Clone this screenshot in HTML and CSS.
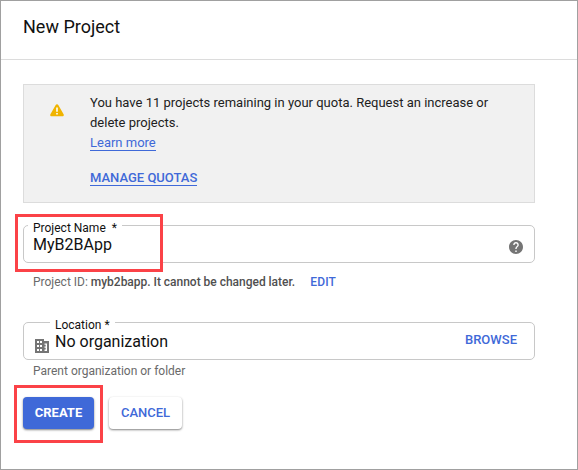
FILE: index.html
```html
<!DOCTYPE html>
<html lang="en">
<head>
<meta charset="utf-8">
<title>New Project</title>
<link rel="stylesheet" href="styles.css">
</head>
<body>
<div class="window">
  <header class="header"><h1 class="title">New Project</h1></header>
  <main class="content">
    <section class="notice">
      <svg class="warning" viewBox="0 0 14 13"><path d="M7 .2c.6 0 1 .3 1.300.8l5.300 9.300c.6 1-.1 2-1.200 2H1.600c-1.100 0-1.800-1-1.200-2L5.700 1C6 .5 6.400.2 7 .2z" fill="#f0b400"/><path d="M6.200 3.500h1.600v4.200H6.200zM6.200 9h1.600v1.600H6.200z" fill="#fff"/></svg>
      <div class="notice-body">
        <p class="notice-text">You have 11 projects remaining in your quota. Request an increase or<br>delete projects.</p>
        <a class="link learn">Learn more</a>
        <a class="link manage">MANAGE QUOTAS</a>
      </div>
    </section>

    <div class="field name-field">
      <span class="label">Project Name &nbsp;*</span>
      <span class="value">MyB2BApp</span>
      <svg class="help" viewBox="2 2 20 20"><path fill="#757575" d="M12 2C6.480 2 2 6.480 2 12s4.480 10 10 10 10-4.480 10-10S17.520 2 12 2zm1 17h-2v-2h2v2zm2.070-7.750l-.9.920C13.450 12.900 13 13.500 13 15h-2v-.5c0-1.100.45-2.100 1.170-2.830l1.240-1.260c.37-.36.59-.86.59-1.410 0-1.100-.9-2-2-2s-2 .9-2 2H8c0-2.210 1.790-4 4-4s4 1.790 4 4c0 .88-.36 1.680-.93 2.250z"/></svg>
      <i class="mark mark-name"></i>
    </div>
    <p class="hint id-hint"><span class="id-label">Project ID:</span> <span class="id-text">myb2bapp. It cannot be changed later.</span><a class="action edit">EDIT</a></p>

    <div class="field location-field">
      <span class="label">Location *</span>
      <svg class="building" viewBox="0 0 14 14"><path fill="#757575" fill-rule="evenodd" d="M0 0h9v2h5V14H0zM2 2v2h2V2zM5 2v2h2V2zM2 6v2h2V6zM5 6v2h2V6zM2 10v2h2v-2zM5 10v2h2v-2zM9.500 4.500v1.300h1.200v1.700H9.500v1.300h1.200v1.700H9.500v1.500h2.500V4.500z"/></svg>
      <span class="value">No organization</span>
      <a class="action browse">BROWSE</a>
    </div>
    <p class="hint">Parent organization or folder</p>

    <div class="buttons">
      <button class="btn create">CREATE</button>
      <button class="btn cancel">CANCEL</button>
      <i class="mark mark-create"></i>
    </div>
  </main>
</div>
</body>
</html>
```
FILE: styles.css
```css
* { box-sizing: border-box; }
body { margin: 0; font-family: Roboto, "Liberation Sans", sans-serif; color: #212121; background: #fff; }
h1, p { margin: 0; }
.window { width: 578px; height: 470px; border: 1px solid #a0a0a0; overflow: hidden; }
.header { height: 59px; border-bottom: 1px solid #dcdcdc; padding: 15px 22px 0; }
.title { font-size: 18px; line-height: 22px; font-weight: 400; color: #111; }
.content { width: 534px; padding: 24px 0 0 22px; }
.notice { display: flex; height: 119px; border: 1px solid #dcdcdc; background: #f1f1f1; }
.warning { width: 14px; height: 13px; margin: 19px 26px 0 26px; }
.notice-body { display: flex; flex-direction: column; align-items: flex-start; padding-top: 8px; }
.notice-text { font-size: 13px; line-height: 20px; white-space: nowrap; }
.link { font-size: 13px; color: #3f69d8; border-bottom: 1px solid #3f69d8; }
.learn { line-height: 15px; margin-top: 2px; }
.manage { line-height: 15px; margin-top: 19px; font-weight: 500; }
.field { position: relative; display: flex; height: 38px; border: 1px solid #c8c8c8; border-radius: 5px; }
.label { position: absolute; top: -5px; left: 4px; padding: 0 5px; background: #fff; font-size: 12px; line-height: 14px; color: #111; white-space: pre; }
.value { font-size: 16px; line-height: 20px; color: #111; margin-top: 9px; }
.name-field { margin-top: 22px; padding-left: 9px; }
.help { width: 14px; height: 14px; margin: 14px 11px 0 auto; }
.location-field { margin-top: 32px; padding-left: 11px; }
.location-field .label { left: 26px; }
.building { width: 14px; height: 14px; margin: 16px 6px 0 0; }
.hint { padding-left: 10px; margin-top: 4px; font-size: 12px; line-height: 15px; color: #6a6a6a; }
.id-hint { display: flex; margin-top: 12px; white-space: pre; }
.id-text { margin-left: 3px; color: #505050; font-weight: 500; letter-spacing: -.02px; }
.action { font-size: 12px; font-weight: 500; color: #3f69d8; }
.edit { margin-left: 15px; letter-spacing: .2px; }
.browse { margin: 9px 17px 0 auto; font-size: 13px; line-height: 16px; }
.buttons { position: relative; display: flex; gap: 15px; margin-top: 18px; }
.btn { height: 32px; padding: 0; border: 0; border-radius: 4px; font: 500 13px/32px Roboto, "Liberation Sans", sans-serif; box-shadow: 0 1px 2px rgba(0,0,0,.4), 0 1px 3px rgba(0,0,0,.12); }
.create { width: 71px; color: #fff; background: #3f69d8; font-weight: 700; }
.cancel { width: 73px; color: #3f69d8; background: #fff; }
.mark { position: absolute; border: 3px solid #fb4247; }
.mark-name { left: -9px; top: -12px; width: 148px; height: 58px; }
.mark-create { left: -9px; top: -12px; width: 89px; height: 58px; }
```
